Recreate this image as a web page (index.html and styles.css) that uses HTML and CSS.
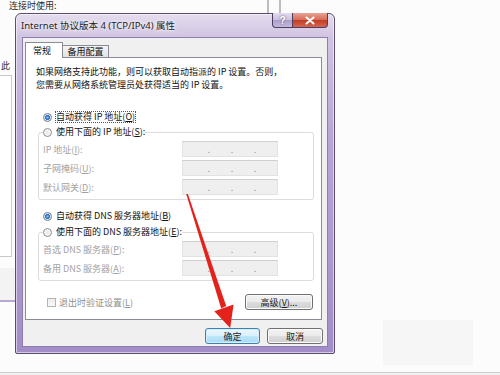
FILE: index.html
```html
<!DOCTYPE html>
<html lang="zh-CN">
<head>
  <meta charset="UTF-8">
  <title>Internet 协议版本 4 (TCP/IPv4) 属性</title>
  <link rel="stylesheet" href="styles.css">
</head>
<body>
  <div class="desktop">
    <!-- window behind the dialog -->
    <div class="bg-label">连接时使用:</div>
    <div class="bg-char">此</div>
    <div class="bg-list"></div>
    <div class="bg-strip"></div>
    <div class="bg-scroll"></div>
    <div class="bg-ghost"></div>
    <div class="bg-floor"></div>

    <div class="dialog">
      <div class="titlebar">
        <span class="title">Internet 协议版本 4 (TCP/IPv4) 属性</span>
        <div class="caption-btns">
          <span class="cap-help">?</span>
          <span class="cap-close">
            <svg width="12" height="9" viewBox="0 0 12 9"><path d="M2.5 1.5 L9.5 7.5 M9.5 1.5 L2.5 7.5" stroke="#fff" stroke-width="2" stroke-linecap="round"/></svg>
          </span>
        </div>
      </div>

      <div class="client">
        <div class="tabs">
          <span class="tab active">常规</span>
          <span class="tab">备用配置</span>
        </div>

        <div class="panel">
          <p class="intro">如果网络支持此功能，则可以获取自动指派的 IP 设置。否则，</p>
          <p class="intro">您需要从网络系统管理员处获得适当的 IP 设置。</p>

          <div class="option first"><span class="radio on"></span><span class="focus">自动获得 IP 地址(<u>O</u>)</span></div>
          <fieldset class="group">
            <legend class="option"><span class="radio"></span>使用下面的 IP 地址(<u>S</u>):</legend>
            <div class="field"><span class="field-name">IP 地址(<u>I</u>):</span><span class="ipbox"><i>.</i><i>.</i><i>.</i></span></div>
            <div class="field"><span class="field-name">子网掩码(<u>U</u>):</span><span class="ipbox"><i>.</i><i>.</i><i>.</i></span></div>
            <div class="field"><span class="field-name">默认网关(<u>D</u>):</span><span class="ipbox"><i>.</i><i>.</i><i>.</i></span></div>
          </fieldset>

          <div class="option second"><span class="radio on"></span>自动获得 DNS 服务器地址(<u>B</u>)</div>
          <fieldset class="group dns">
            <legend class="option"><span class="radio"></span>使用下面的 DNS 服务器地址(<u>E</u>):</legend>
            <div class="field"><span class="field-name">首选 DNS 服务器(<u>P</u>):</span><span class="ipbox"><i>.</i><i>.</i><i>.</i></span></div>
            <div class="field"><span class="field-name">备用 DNS 服务器(<u>A</u>):</span><span class="ipbox"><i>.</i><i>.</i><i>.</i></span></div>
          </fieldset>

          <div class="panel-foot">
            <span class="check"><span class="checkbox"></span>退出时验证设置(<u>L</u>)</span>
            <span class="btn advanced">高级(<u>V</u>)...</span>
          </div>
        </div>

        <div class="actions">
          <span class="btn default">确定</span>
          <span class="btn">取消</span>
        </div>
      </div>
    </div>

    <svg class="arrow" width="500" height="375" viewBox="0 0 500 375">
      <polygon points="186.2,194 187.9,194 226.2,306 221.2,308.6" fill="#e3231b"/>
      <polygon points="214.3,311.3 233.6,304.4 230.2,328" fill="#e3231b"/>
    </svg>
  </div>
</body>
</html>
```

FILE: styles.css
```css
body {
  margin: 0;
  background: #fcfcfc;
  font-family: "Noto Sans CJK SC", sans-serif;
  font-size: 9px;
  color: #111;
}

.desktop {
  position: relative;
  width: 500px;
  height: 375px;
  overflow: hidden;
}

/* background window */
.bg-label {
  position: absolute;
  left: 9px;
  top: 0;
  line-height: 12px;
  color: #2a2a2a;
}

.bg-char {
  position: absolute;
  left: 1px;
  top: 61px;
  line-height: 10px;
  color: #2a2a2a;
}

.bg-list {
  position: absolute;
  left: -2px;
  top: 75px;
  width: 12px;
  height: 180px;
  border: 1px solid #c9c9c9;
  background: #fff;
}

.bg-strip {
  position: absolute;
  left: 0;
  top: 268px;
  width: 16px;
  height: 32px;
  background: #f3f3f3;
  border-bottom: 2px solid #b7a8d0;
}

.bg-scroll {
  position: absolute;
  left: 267px;
  top: 0;
  width: 10px;
  height: 14px;
  border-left: 2px solid #bdbdbd;
  border-right: 2px solid #bdbdbd;
}

.bg-ghost {
  position: absolute;
  left: 383px;
  top: 320px;
  width: 90px;
  height: 45px;
  background: #f6f6f6;
}

.bg-floor {
  position: absolute;
  left: 0;
  top: 372px;
  width: 500px;
  height: 3px;
  border-top: 1px solid #cdcdcd;
  background: #f2f2f2;
}

/* dialog frame */
.dialog {
  position: absolute;
  left: 15px;
  top: 13px;
  width: 320px;
  height: 341px;
  box-sizing: border-box;
  display: flex;
  flex-direction: column;
  padding: 0 6px 6px;
  border: 1px solid #5b4d70;
  border-radius: 6px 6px 2px 2px;
  background: linear-gradient(to bottom, #e4dcee 0, #d0c3e2 24px, #b9a6d6 120px, #a38dc9 100%);
  box-shadow: inset 0 0 0 1px rgba(255, 255, 255, 0.55);
}

.titlebar {
  height: 23px;
  display: flex;
  justify-content: space-between;
  align-items: flex-start;
}

.title {
  margin-left: -1px;
  font-family: "Noto Sans", "Noto Sans CJK SC", sans-serif;
  font-size: 9.5px;
  line-height: 23px;
  color: #1e1e1e;
  text-shadow: 0 0 6px #fff, 0 0 3px #fff;
}

.caption-btns {
  display: flex;
  margin-top: -1px;
}

.cap-help,
.cap-close {
  height: 15px;
  box-sizing: border-box;
  display: flex;
  align-items: center;
  justify-content: center;
  border: 1px solid #4c3f60;
  border-top: none;
}

.cap-help {
  width: 20px;
  border-right: none;
  border-radius: 0 0 0 4px;
  background: linear-gradient(to bottom, #e3dced 0, #cbbfde 50%, #ad9dcb 51%, #c5b9dc 100%);
  color: #fff;
  font-family: "Liberation Sans", sans-serif;
  font-weight: bold;
  font-size: 10px;
  text-shadow: 0 0 2px #55466e;
}

.cap-close {
  width: 36px;
  border-radius: 0 0 4px 0;
  background: linear-gradient(to bottom, #e7a394 0, #d56b56 50%, #c23c27 51%, #d4674f 100%);
}

/* client area */
.client {
  flex: 1;
  border: 1px solid #8e7dad;
  background: #f0f0f0;
  padding: 4px 4px 0 2px;
}

.tabs {
  position: relative;
  z-index: 1;
  display: flex;
  align-items: flex-end;
  height: 15px;
}

.tab {
  box-sizing: border-box;
  height: 12px;
  width: 47px;
  margin-left: -1px;
  border: 1px solid #898c95;
  border-bottom: none;
  background: linear-gradient(to bottom, #f4f4f4, #e3e3e3);
  text-align: center;
  line-height: 11px;
}

.tab.active {
  width: 38px;
  height: 16px;
  margin-left: 0;
  margin-bottom: -1px;
  background: #fff;
  line-height: 15px;
  padding-right: 4px;
}

.panel {
  box-sizing: border-box;
  width: 297px;
  height: 263px;
  border: 1px solid #898c95;
  background: #fff;
  padding: 7px 0 0 10px;
}

.intro {
  margin: 0;
  height: 13px;
  line-height: 13px;
  white-space: nowrap;
}

.option {
  display: flex;
  align-items: center;
  height: 12px;
  line-height: 12px;
  white-space: nowrap;
}

.option.first {
  margin-top: 20px;
  padding-left: 7px;
}

.option.second {
  margin-top: 10px;
  padding-left: 7px;
}

.focus {
  outline: 1px dotted #555;
  outline-offset: 0;
  line-height: 10px;
}

.radio {
  box-sizing: border-box;
  width: 9px;
  height: 9px;
  margin-right: 4px;
  border-radius: 50%;
  border: 1px solid #8d8d8d;
  background: radial-gradient(circle, #e9e9e9 0, #f9f9f9 4px);
}

.radio.on {
  border-color: #6f7f93;
  background: radial-gradient(circle, #7fc4f2 0, #2a6cbf 2.2px, #dfe6ee 2.8px, #f6f6f6 4px);
}

.group {
  box-sizing: border-box;
  width: 276px;
  margin: 3px 0 0 2px;
  padding: 3px 4px 4px;
  border: 1px solid #dcdcdc;
  border-radius: 3px;
}

.group.dns {
  margin-top: 4px;
}

.group legend {
  padding: 0;
}

.field {
  display: flex;
  align-items: center;
  height: 16px;
  margin-bottom: 3px;
  color: #a2a2a2;
  white-space: nowrap;
}

.field:last-child {
  margin-bottom: 0;
}

.field-name {
  width: 139px;
}

.ipbox {
  box-sizing: border-box;
  width: 96px;
  height: 16px;
  display: flex;
  justify-content: space-evenly;
  align-items: flex-end;
  padding-left: 4px;
  border: 1px solid #e2e2e2;
  border-top-color: #cfcfcf;
  background: #efefef;
}

.ipbox i {
  font-style: normal;
  color: #9a9a9a;
  line-height: 12px;
}

.panel-foot {
  box-sizing: border-box;
  width: 276px;
  margin: 13px 0 0 2px;
  padding: 0 1px 0 9px;
  height: 16px;
  display: flex;
  justify-content: space-between;
  align-items: center;
}

.check {
  display: flex;
  align-items: center;
  color: #8f8f8f;
}

.checkbox {
  box-sizing: border-box;
  width: 9px;
  height: 9px;
  margin-right: 3px;
  border: 1px solid #b4b4b4;
  background: linear-gradient(to bottom, #ededed, #f9f9f9);
}

.btn {
  box-sizing: border-box;
  height: 16px;
  display: flex;
  align-items: center;
  justify-content: center;
  border: 1px solid #707070;
  border-radius: 3px;
  background: linear-gradient(to bottom, #f2f2f2 0, #ebebeb 50%, #dddddd 51%, #cfcfcf 100%);
  box-shadow: inset 0 0 0 1px #fbfbfb;
  color: #1b1b1b;
}

.advanced {
  width: 68px;
}

.actions {
  display: flex;
  justify-content: flex-end;
  gap: 7px;
  margin-top: 8px;
}

.actions .btn {
  width: 56px;
}

.btn.default {
  width: 55px;
  border-color: #3c7fb1;
  background: linear-gradient(to bottom, #eaf6fd 0, #d9f0fc 50%, #bee6fd 51%, #a7d9f5 100%);
  box-shadow: inset 0 0 0 1px #d4eefc;
}

.arrow {
  position: absolute;
  left: 0;
  top: 0;
  pointer-events: none;
}
```
